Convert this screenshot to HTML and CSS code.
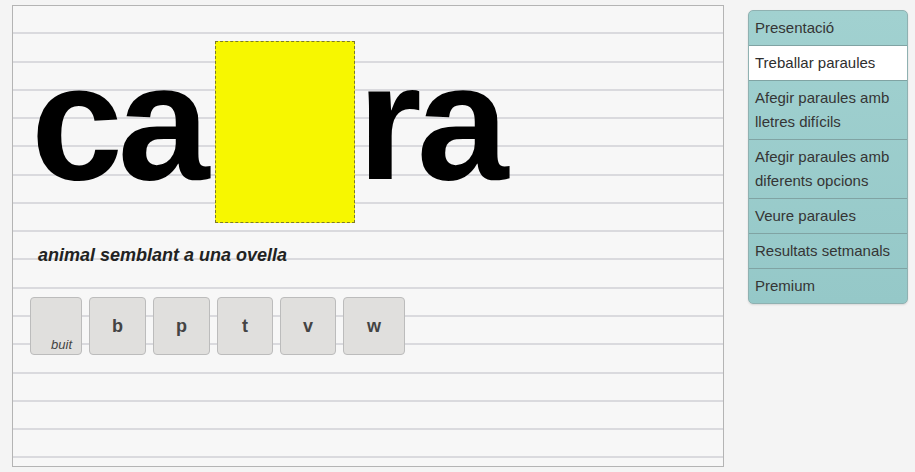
FILE: index.html
```html
<!DOCTYPE html>
<html lang="ca">
<head>
<meta charset="utf-8">
<title>Treballar paraules</title>
<link rel="stylesheet" href="styles.css">
</head>
<body>
<div class="page">
  <main class="board">
    <div class="word">
      <span class="letters">ca</span>
      <span class="gap-box"></span>
      <span class="letters">ra</span>
    </div>
    <p class="hint">animal semblant a una ovella</p>
    <div class="choices">
      <button class="choice choice-empty"><span class="empty-label">buit</span></button>
      <button class="choice">b</button>
      <button class="choice">p</button>
      <button class="choice">t</button>
      <button class="choice">v</button>
      <button class="choice choice-wide">w</button>
    </div>
  </main>
  <nav class="menu">
    <a class="menu-item">Presentació</a>
    <a class="menu-item active">Treballar paraules</a>
    <a class="menu-item">Afegir paraules amb lletres difícils</a>
    <a class="menu-item">Afegir paraules amb diferents opcions</a>
    <a class="menu-item">Veure paraules</a>
    <a class="menu-item">Resultats setmanals</a>
    <a class="menu-item last">Premium</a>
  </nav>
</div>
</body>
</html>
```
FILE: styles.css
```css
html, body {
  margin: 0;
  padding: 0;
}
body {
  background: #f4f4f4;
  font-family: "Liberation Sans", Arial, sans-serif;
  color: #222;
  width: 915px;
  height: 472px;
  overflow: hidden;
}
.page {
  display: flex;
  align-items: flex-start;
  padding: 5px 0 0 12px;
}
.board {
  box-sizing: border-box;
  width: 712px;
  height: 462px;
  border: 1px solid #b4b4b4;
  background-color: #f7f7f7;
  background-image: repeating-linear-gradient(to bottom,
    transparent 0,
    transparent 26.27px,
    #dadade 26.27px,
    #dadade 28.27px);
  padding: 35px 0 0 18px;
}
.word {
  display: flex;
  align-items: flex-start;
  height: 182px;
}
.letters {
  font-size: 165px;
  line-height: 165px;
  font-weight: bold;
  color: #000;
  letter-spacing: -5px;
  margin-top: -1px;
}
.gap-box {
  box-sizing: border-box;
  width: 140px;
  height: 182px;
  margin: 0 3px 0 10px;
  background: #f7f700;
  border: 1px dashed #7d7a2a;
}
.hint {
  margin: 21px 0 0 7px;
  font-size: 18px;
  line-height: 22px;
  font-weight: bold;
  font-style: italic;
  color: #222;
}
.choices {
  display: flex;
  gap: 7px;
  margin: 31px 0 0 -1px;
}
.choice {
  box-sizing: border-box;
  height: 58px;
  min-width: 56px;
  padding: 0 22px;
  background: #e0dfdd;
  border: 1px solid #bcbcbc;
  border-radius: 4px;
  font-family: "Liberation Sans", Arial, sans-serif;
  font-size: 18px;
  font-weight: bold;
  color: #444;
  display: flex;
  align-items: center;
  justify-content: center;
}
.choice-wide {
  padding: 0 23px;
}
.choice-empty {
  width: 52px;
  min-width: 52px;
  padding: 0 9px 2px 0;
  align-items: flex-end;
  justify-content: flex-end;
}
.empty-label {
  font-size: 13px;
  line-height: 14px;
  font-weight: normal;
  font-style: italic;
  color: #444;
}
.menu {
  box-sizing: border-box;
  width: 160px;
  margin: 5px 0 0 24px;
  display: flex;
  flex-direction: column;
  border: 1px solid #8fb1b1;
  border-radius: 5px;
  background: linear-gradient(to bottom, #a1d1d0, #95c8c8);
  overflow: hidden;
  box-shadow: 0 1px 2px rgba(0, 0, 0, 0.12);
}
.menu-item {
  display: block;
  padding: 5px 7px 5px 6px;
  font-size: 15px;
  line-height: 24px;
  color: #353535;
  border-bottom: 1px solid #80a3a3;
}
.menu-item.active {
  background: #ffffff;
  color: #2e2e2e;
}
.menu-item.last {
  border-bottom: none;
}
```
